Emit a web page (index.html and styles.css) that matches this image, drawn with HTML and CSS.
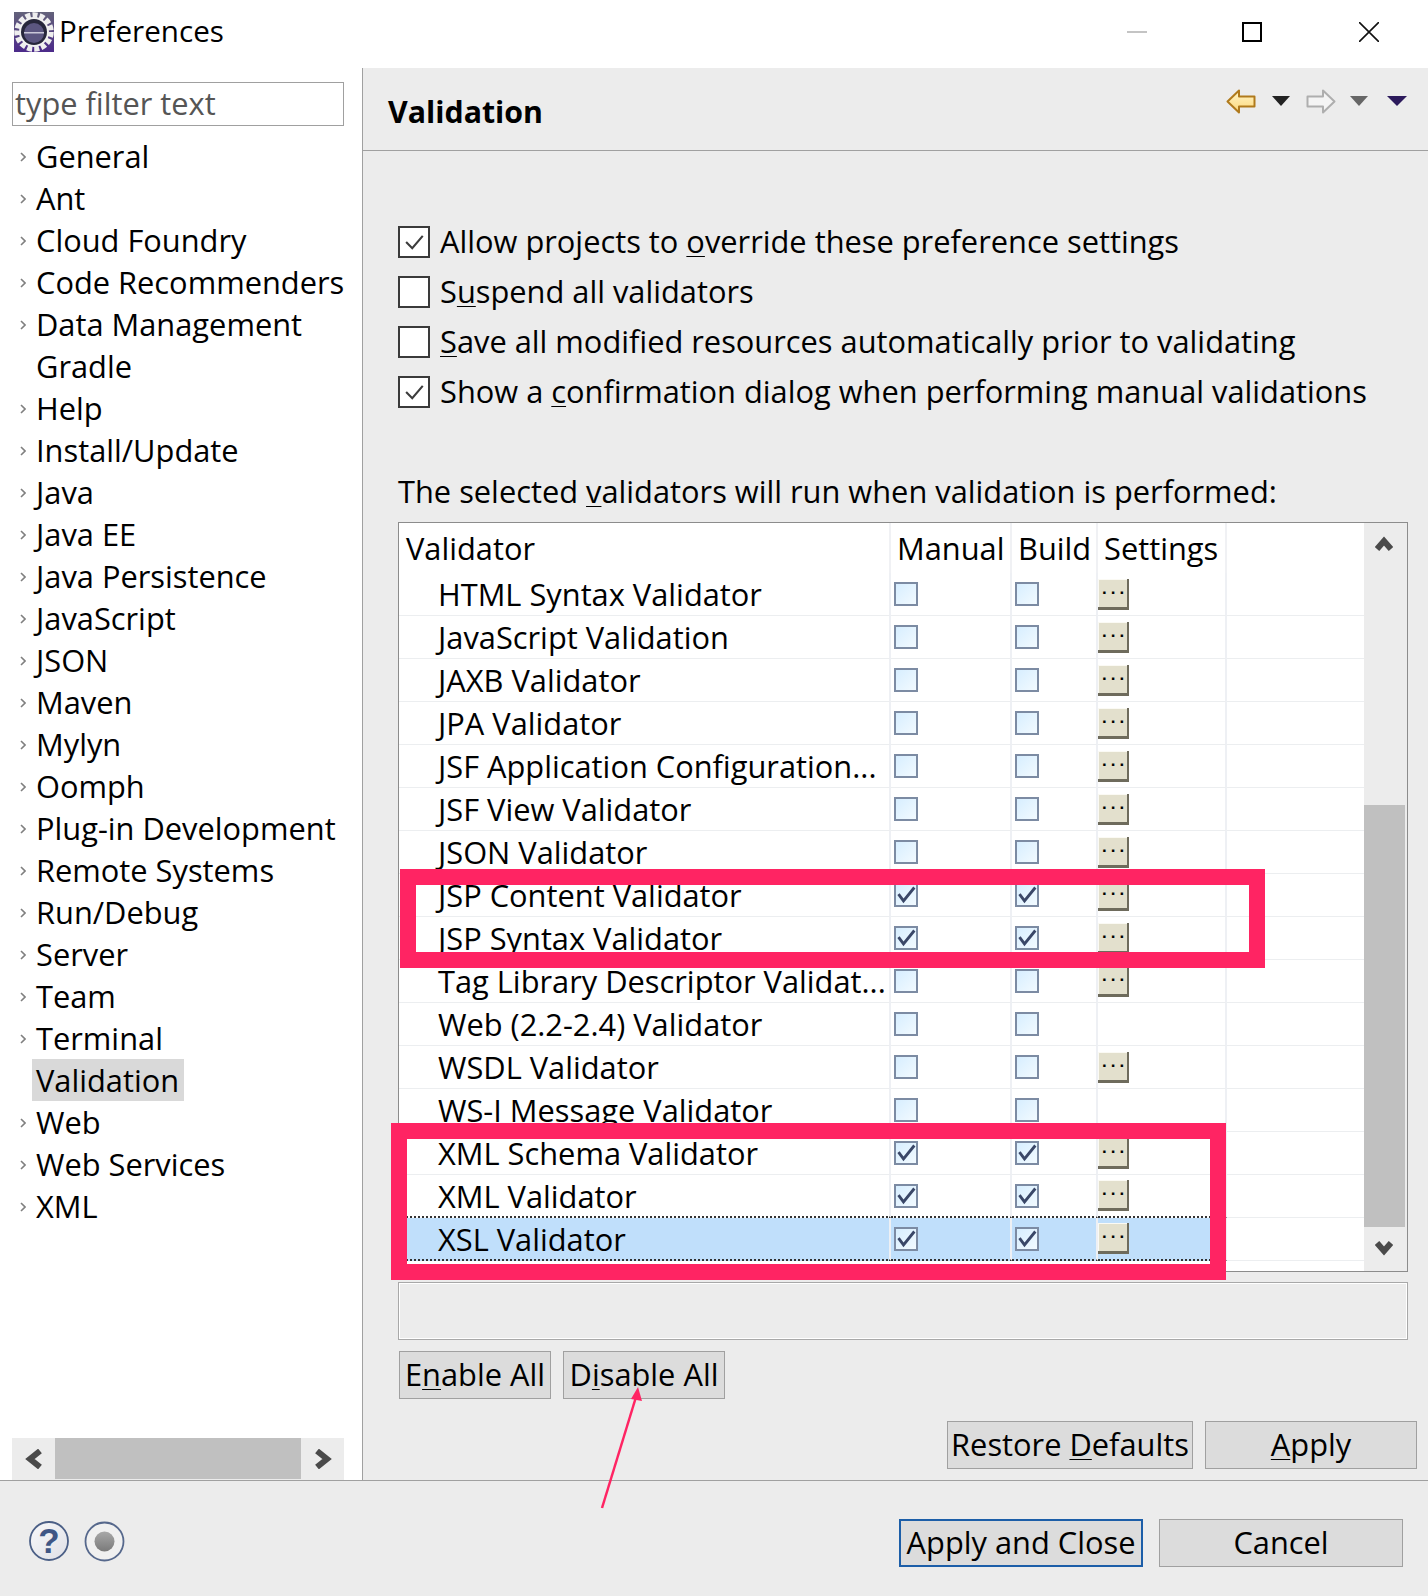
FILE: index.html
```html
<!DOCTYPE html>
<html lang="en">
<head>
<meta charset="utf-8">
<title>Preferences</title>
<link rel="stylesheet" href="styles.css">
</head>
<body>
<svg class="defs" width="0" height="0" aria-hidden="true">
  <defs>
    <symbol id="chev" viewBox="0 0 6 10"><path d="M1 1l4 4-4 4" fill="none" stroke="#808080" stroke-width="1.600"/></symbol>
    <symbol id="tick" viewBox="0 0 24 24"><path d="M3 11l6 8L22 3" fill="none" stroke="#3a4768" stroke-width="3.400"/></symbol>
    <symbol id="bigtick" viewBox="0 0 32 32"><path d="M7 16l7 7L26 9" fill="none" stroke="#3c3c3c" stroke-width="2.400"/></symbol>
    <linearGradient id="backfill" x1="0" y1="0" x2="0" y2="1"><stop offset="0" stop-color="#fff6c9"/><stop offset="1" stop-color="#fdd77a"/></linearGradient>
    <linearGradient id="iconbg" x1="0" y1="0" x2="0" y2="1"><stop offset="0" stop-color="#63627a"/><stop offset="1" stop-color="#4c2a8a"/></linearGradient>
    <linearGradient id="dotfill" x1="0" y1="0" x2="0" y2="1"><stop offset="0" stop-color="#a8a8a8"/><stop offset="1" stop-color="#7a7a7a"/></linearGradient>
    <linearGradient id="helpfill" x1="0" y1="0" x2="1" y2="1"><stop offset="0" stop-color="#f8f8fa"/><stop offset="1" stop-color="#dfe0e6"/></linearGradient>
  </defs>
</svg>
<div class="window">
  <header class="titlebar">
    <svg class="app-icon" viewBox="0 0 40 40" width="40" height="40">
      <rect width="40" height="40" fill="url(#iconbg)"/>
      <circle cx="20" cy="20" r="17" fill="none" stroke="#eee" stroke-width="5.500" stroke-dasharray="5 2.100"/>
      <circle cx="20" cy="20" r="15" fill="#f1f1f1"/>
      <circle cx="20" cy="20" r="13" fill="#26263a"/>
      <circle cx="20" cy="21" r="10" fill="#5b5680"/>
      <rect x="10" y="20" width="20" height="1.500" fill="#c9c7d8"/>
    </svg>
    <span class="title-text">Preferences</span>
    <div class="win-controls">
      <svg width="20" height="20" viewBox="0 0 20 20"><path d="M0 10h20" stroke="#c4c4c4" stroke-width="2"/></svg>
      <svg width="20" height="20" viewBox="0 0 20 20"><rect x="1" y="1" width="18" height="18" fill="none" stroke="#000" stroke-width="2"/></svg>
      <svg class="win-close" width="20" height="20" viewBox="0 0 20 20"><path d="M0 0l20 20M20 0L0 20" stroke="#111" stroke-width="1.600"/></svg>
    </div>
  </header>

  <div class="main">
    <aside class="sidebar">
      <div class="filter">type filter text</div>
      <ul class="tree">
        <li class="node"><svg class="chev"><use href="#chev"/></svg><span class="node-label">General</span></li>
        <li class="node"><svg class="chev"><use href="#chev"/></svg><span class="node-label">Ant</span></li>
        <li class="node"><svg class="chev"><use href="#chev"/></svg><span class="node-label">Cloud Foundry</span></li>
        <li class="node"><svg class="chev"><use href="#chev"/></svg><span class="node-label">Code Recommenders</span></li>
        <li class="node"><svg class="chev"><use href="#chev"/></svg><span class="node-label">Data Management</span></li>
        <li class="node leaf"><span class="node-label">Gradle</span></li>
        <li class="node"><svg class="chev"><use href="#chev"/></svg><span class="node-label">Help</span></li>
        <li class="node"><svg class="chev"><use href="#chev"/></svg><span class="node-label">Install/Update</span></li>
        <li class="node"><svg class="chev"><use href="#chev"/></svg><span class="node-label">Java</span></li>
        <li class="node"><svg class="chev"><use href="#chev"/></svg><span class="node-label">Java EE</span></li>
        <li class="node"><svg class="chev"><use href="#chev"/></svg><span class="node-label">Java Persistence</span></li>
        <li class="node"><svg class="chev"><use href="#chev"/></svg><span class="node-label">JavaScript</span></li>
        <li class="node"><svg class="chev"><use href="#chev"/></svg><span class="node-label">JSON</span></li>
        <li class="node"><svg class="chev"><use href="#chev"/></svg><span class="node-label">Maven</span></li>
        <li class="node"><svg class="chev"><use href="#chev"/></svg><span class="node-label">Mylyn</span></li>
        <li class="node"><svg class="chev"><use href="#chev"/></svg><span class="node-label">Oomph</span></li>
        <li class="node"><svg class="chev"><use href="#chev"/></svg><span class="node-label">Plug-in Development</span></li>
        <li class="node"><svg class="chev"><use href="#chev"/></svg><span class="node-label">Remote Systems</span></li>
        <li class="node"><svg class="chev"><use href="#chev"/></svg><span class="node-label">Run/Debug</span></li>
        <li class="node"><svg class="chev"><use href="#chev"/></svg><span class="node-label">Server</span></li>
        <li class="node"><svg class="chev"><use href="#chev"/></svg><span class="node-label">Team</span></li>
        <li class="node"><svg class="chev"><use href="#chev"/></svg><span class="node-label">Terminal</span></li>
        <li class="node leaf"><span class="node-label current">Validation</span></li>
        <li class="node"><svg class="chev"><use href="#chev"/></svg><span class="node-label">Web</span></li>
        <li class="node"><svg class="chev"><use href="#chev"/></svg><span class="node-label">Web Services</span></li>
        <li class="node"><svg class="chev"><use href="#chev"/></svg><span class="node-label">XML</span></li>
      </ul>
      <div class="hscroll">
        <div class="hscroll-btn"><svg width="18" height="20" viewBox="0 0 18 20"><path d="M15 2L5 10l10 8" fill="none" stroke="#4a4a4a" stroke-width="6"/></svg></div>
        <div class="hscroll-thumb"></div>
        <div class="hscroll-btn"><svg width="18" height="20" viewBox="0 0 18 20"><path d="M3 2l10 8-10 8" fill="none" stroke="#4a4a4a" stroke-width="6"/></svg></div>
      </div>
    </aside>

    <section class="panel">
      <div class="panel-head">
        <h1 class="panel-title">Validation</h1>
        <div class="nav">
          <svg class="nav-arrow" width="30" height="25" viewBox="0 0 30 25"><path d="M1.500 12.500L13 1.500v6h15.500v10H13v6z" fill="url(#backfill)" stroke="#b07a1c" stroke-width="2" stroke-linejoin="round"/></svg>
          <svg class="tri tri-one" width="18" height="10" viewBox="0 0 18 10"><path d="M0 0h18L9 10z" fill="#222"/></svg>
          <svg class="nav-arrow" width="30" height="25" viewBox="0 0 30 25"><path d="M28.500 12.500L17 1.500v6H1.500v10H17v6z" fill="#f4f4f4" stroke="#aeaeae" stroke-width="2" stroke-linejoin="round"/></svg>
          <svg class="tri tri-two" width="18" height="10" viewBox="0 0 18 10"><path d="M0 0h18L9 10z" fill="#666"/></svg>
          <svg class="tri tri-last" width="20" height="10" viewBox="0 0 20 10"><path d="M0 0h20L10 10z" fill="#2c1a5c"/></svg>
        </div>
      </div>

      <div class="panel-body">
        <div class="options">
          <div class="option"><span class="box"><svg width="28" height="28"><use href="#bigtick"/></svg></span><span class="option-label">Allow projects to <u>o</u>verride these preference settings</span></div>
          <div class="option"><span class="box"></span><span class="option-label">S<u>u</u>spend all validators</span></div>
          <div class="option"><span class="box"></span><span class="option-label"><u>S</u>ave all modified resources automatically prior to validating</span></div>
          <div class="option"><span class="box"><svg width="28" height="28"><use href="#bigtick"/></svg></span><span class="option-label">Show a <u>c</u>onfirmation dialog when performing manual validations</span></div>
        </div>
        <p class="caption">The selected <u>v</u>alidators will run when validation is performed:</p>

        <div class="grid-frame">
          <table class="grid">
            <colgroup><col class="c-name"><col class="c-manual"><col class="c-build"><col class="c-settings"><col></colgroup>
            <thead>
              <tr><th class="th-name">Validator</th><th>Manual</th><th>Build</th><th>Settings</th><th class="filler"></th></tr>
            </thead>
            <tbody>
              <tr><td class="name">HTML Syntax Validator</td><td><span class="cb"></span></td><td><span class="cb"></span></td><td><span class="dots">...</span></td><td class="filler"></td></tr>
              <tr><td class="name">JavaScript Validation</td><td><span class="cb"></span></td><td><span class="cb"></span></td><td><span class="dots">...</span></td><td class="filler"></td></tr>
              <tr><td class="name">JAXB Validator</td><td><span class="cb"></span></td><td><span class="cb"></span></td><td><span class="dots">...</span></td><td class="filler"></td></tr>
              <tr><td class="name">JPA Validator</td><td><span class="cb"></span></td><td><span class="cb"></span></td><td><span class="dots">...</span></td><td class="filler"></td></tr>
              <tr><td class="name">JSF Application Configuration...</td><td><span class="cb"></span></td><td><span class="cb"></span></td><td><span class="dots">...</span></td><td class="filler"></td></tr>
              <tr><td class="name">JSF View Validator</td><td><span class="cb"></span></td><td><span class="cb"></span></td><td><span class="dots">...</span></td><td class="filler"></td></tr>
              <tr><td class="name">JSON Validator</td><td><span class="cb"></span></td><td><span class="cb"></span></td><td><span class="dots">...</span></td><td class="filler"></td></tr>
              <tr><td class="name">JSP Content Validator</td><td><span class="cb"><svg><use href="#tick"/></svg></span></td><td><span class="cb"><svg><use href="#tick"/></svg></span></td><td><span class="dots">...</span></td><td class="filler"></td></tr>
              <tr><td class="name">JSP Syntax Validator</td><td><span class="cb"><svg><use href="#tick"/></svg></span></td><td><span class="cb"><svg><use href="#tick"/></svg></span></td><td><span class="dots">...</span></td><td class="filler"></td></tr>
              <tr><td class="name">Tag Library Descriptor Validat...</td><td><span class="cb"></span></td><td><span class="cb"></span></td><td><span class="dots">...</span></td><td class="filler"></td></tr>
              <tr><td class="name">Web (2.2-2.4) Validator</td><td><span class="cb"></span></td><td><span class="cb"></span></td><td></td><td class="filler"></td></tr>
              <tr><td class="name">WSDL Validator</td><td><span class="cb"></span></td><td><span class="cb"></span></td><td><span class="dots">...</span></td><td class="filler"></td></tr>
              <tr><td class="name">WS-I Message Validator</td><td><span class="cb"></span></td><td><span class="cb"></span></td><td></td><td class="filler"></td></tr>
              <tr><td class="name">XML Schema Validator</td><td><span class="cb"><svg><use href="#tick"/></svg></span></td><td><span class="cb"><svg><use href="#tick"/></svg></span></td><td><span class="dots">...</span></td><td class="filler"></td></tr>
              <tr class="before-selected"><td class="name">XML Validator</td><td><span class="cb"><svg><use href="#tick"/></svg></span></td><td><span class="cb"><svg><use href="#tick"/></svg></span></td><td><span class="dots">...</span></td><td class="filler"></td></tr>
              <tr class="selected"><td class="name">XSL Validator</td><td><span class="cb"><svg><use href="#tick"/></svg></span></td><td><span class="cb"><svg><use href="#tick"/></svg></span></td><td><span class="dots">...</span></td><td class="filler"></td></tr>
            </tbody>
          </table>
          <div class="vscroll">
            <div class="vscroll-up"><svg width="18" height="16" viewBox="0 0 18 16"><path d="M2 14l7-8 7 8" fill="none" stroke="#4a4a4a" stroke-width="6"/></svg></div>
            <div class="vscroll-thumb"></div>
            <div class="vscroll-down"><svg width="18" height="16" viewBox="0 0 18 16"><path d="M2 2l7 8 7-8" fill="none" stroke="#4a4a4a" stroke-width="6"/></svg></div>
          </div>
        </div>

        <div class="status"></div>

        <div class="btn-row">
          <button class="btn btn-enable">E<u>n</u>able All</button>
          <button class="btn btn-disable">D<u>i</u>sable All</button>
        </div>
        <div class="btn-row btn-row-end">
          <button class="btn btn-restore">Restore <u>D</u>efaults</button>
          <button class="btn btn-apply"><u>A</u>pply</button>
        </div>
      </div>
    </section>
  </div>

  <footer class="footer">
    <div class="footer-icons">
      <svg width="40" height="40" viewBox="0 0 40 40"><circle cx="20" cy="20" r="19" fill="url(#helpfill)" stroke="#4b5f86" stroke-width="1.800"/><text x="20" y="32" class="help-mark">?</text></svg>
      <svg width="41" height="41" viewBox="0 0 41 41"><circle cx="20.500" cy="20.500" r="19" fill="#f0f0f0" stroke="#56688c" stroke-width="1.800"/><circle cx="20.500" cy="20.500" r="10" fill="url(#dotfill)"/></svg>
    </div>
    <div class="footer-btns">
      <button class="btn btn-default">Apply and Close</button>
      <button class="btn btn-cancel">Cancel</button>
    </div>
  </footer>

  <div class="mark mark-one"></div>
  <div class="mark mark-two"></div>
  <svg class="pointer" width="60" height="140" viewBox="0 0 60 140">
    <path d="M8 133L42 22" stroke="#ff2463" stroke-width="2.500"/>
    <path d="M44 12l-7 12 11 2z" fill="#ff2463"/>
  </svg>
</div>
</body>
</html>
```

FILE: styles.css
```css
* { box-sizing: border-box; }
html, body { margin: 0; padding: 0; }
body {
  background: #ececec;
  color: #000;
  font-family: "Open Sans", "Noto Sans", sans-serif;
  font-size: 30.8px;
}
.defs { position: absolute; }
u { text-decoration-thickness: 1px; text-underline-offset: 3px; }

.window { position: relative; width: 1428px; height: 1596px; overflow: hidden; display: flex; flex-direction: column; }

.titlebar { height: 68px; flex: none; background: #fff; display: flex; align-items: center; padding-left: 14px; }
.app-icon { flex: none; margin-top: -4px; }
.title-text { margin-left: 5px; margin-top: -8px; font-size: 29.6px; }
.win-controls { margin-left: auto; display: flex; gap: 95px; padding-right: 49px; margin-top: -4px; }
.win-close { margin-left: 2px; }

.main { height: 1412px; flex: none; display: flex; }

.sidebar { width: 363px; flex: none; background: #fff; border-right: 1px solid #a0a0a0; padding: 14px 18px 0 12px; display: flex; flex-direction: column; }
.filter { height: 44px; border: 1px solid #a0a0a0; padding-left: 2px; line-height: 40px; color: #555; white-space: nowrap; }
.tree { list-style: none; margin: 9px 0 0; padding: 0; }
.node { height: 42px; display: flex; align-items: center; white-space: nowrap; }
.chev { width: 6px; height: 10px; margin: 2px 6px 0 8px; flex: none; }
.leaf { padding-left: 20px; }
.node-label { padding: 0 5px 0 4px; line-height: 42px; }
.current { background: #d9d9d9; }

.hscroll { margin-top: auto; height: 42px; display: flex; background: #ececec; }
.hscroll-btn { width: 43px; flex: none; display: flex; align-items: center; justify-content: center; }
.hscroll-thumb { flex: 1; background: #c0c0c0; margin-bottom: 1px; }

.panel { flex: 1; min-width: 0; display: flex; flex-direction: column; }
.panel-head { height: 83px; flex: none; border-bottom: 1px solid #a0a0a0; display: flex; padding: 0 21px 0 25px; align-items: center; }
.panel-title { margin: 4px 0 0; font-size: 30.3px; font-weight: 700; }
.nav { margin-left: auto; margin-top: -16px; display: flex; align-items: center; }
.tri-one { margin: 0 16px; }
.tri-two { margin: 0 16px 0 14px; }
.tri-last { margin: 0 0 0 3px; }

.panel-body { padding: 66px 20px 0 35px; }
.option { height: 50px; display: flex; align-items: center; white-space: nowrap; }
.option-label { padding-bottom: 3px; }
.box { width: 32px; height: 32px; flex: none; margin-right: 10px; border: 2px solid #3a3a3a; background: #fff; display: block; }
.box svg { display: block; }
.caption { margin: 50px 0 0; height: 50px; line-height: 48px; white-space: nowrap; }

.grid-frame { margin-top: 5px; height: 750px; width: 1010px; border: 1px solid #8c8c8c; background: #fff; display: flex; }
.grid { width: 965px; height: 0; flex: none; table-layout: fixed; border-collapse: separate; border-spacing: 0; }
.c-name { width: 492px; }
.c-manual { width: 121px; }
.c-build { width: 86px; }
.c-settings { width: 129px; }
.grid th { height: 50px; padding: 0 0 0 6px; font-weight: 400; line-height: 36px; text-align: left; white-space: nowrap; border-right: 2px solid #f0f1f4; }
.grid th.th-name { padding-left: 7px; }
.grid td { height: 43px; padding: 0; line-height: 36px; border-right: 2px solid #eef0f4; border-bottom: 1px solid #eceef0; white-space: nowrap; overflow: visible; vertical-align: middle; }
.grid th.filler, .grid td.filler { border-right: 0; }
.grid td.name { padding: 0 0 0 39px; }
.before-selected td { border-bottom: 2px dotted #333; }
.selected td { background: #c0dffb; border-bottom: 2px dotted #333; }
.grid .before-selected td.filler, .grid .selected td.filler { background: #fff; border-bottom: 1px solid #eceef0; }

.cb { display: block; width: 24px; height: 24px; margin-left: 3px; border: 2px solid #7c8ba3; background: linear-gradient(135deg, #d7eeff, #f2faff); }
.cb svg { display: block; width: 20px; height: 20px; }
.dots { display: block; width: 31px; height: 31px; background: #e3e0cd; border-right: 2px solid #6e6b5c; border-bottom: 3px solid #6e6b5c; box-shadow: inset 1px 1px 0 #fbfaf4; font-family: "Liberation Sans", sans-serif; font-size: 17px; font-weight: 700; line-height: 20px; text-align: center; letter-spacing: 4px; padding-left: 4px; }

.vscroll { width: 43px; flex: none; background: #ececec; display: flex; flex-direction: column; padding-right: 2px; }
.vscroll-up { height: 282px; flex: none; display: flex; justify-content: center; padding: 12px 2px 0 0; }
.vscroll-thumb { height: 422px; flex: none; background: #c0c0c0; }
.vscroll-down { flex: 1; display: flex; justify-content: center; align-items: center; padding-right: 2px; }

.status { margin-top: 10px; width: 1010px; height: 58px; border: 1px solid #a8a8a8; box-shadow: inset 1px 1px 0 #fff, inset -1px -1px 0 #fff; }

.btn-row { margin-top: 11px; display: flex; gap: 12px; }
.btn-row-end { margin-top: 22px; justify-content: flex-end; margin-right: -9px; }
.btn { height: 48px; padding: 0 0 2px; border: 1px solid #a0a0a0; background: #dcdcdc; font: inherit; color: #000; white-space: nowrap; text-align: center; line-height: 42px; }
.btn-row .btn-enable { margin-left: 1px; width: 152px; }
.btn-disable { width: 162px; }
.btn-restore { width: 246px; }
.btn-apply { width: 212px; }

.footer { flex: 1; border-top: 1px solid #a0a0a0; display: flex; justify-content: space-between; padding: 38px 25px 0 29px; }
.footer-icons { display: flex; gap: 15px; align-items: flex-start; padding-top: 2px; }
.help-mark { font-family: "Liberation Sans", sans-serif; font-size: 35px; font-weight: 700; fill: #3f5685; text-anchor: middle; }
.footer-btns { display: flex; gap: 16px; }
.btn-default { width: 244px; border: 2px solid #1c5ea8; }
.btn-cancel { width: 244px; }

.mark { position: absolute; border: 16px solid #ff2463; }
.mark-one { left: 400px; top: 869px; width: 865px; height: 99px; }
.mark-two { left: 391px; top: 1123px; width: 835px; height: 157px; }
.pointer { position: absolute; left: 594px; top: 1375px; }
```
